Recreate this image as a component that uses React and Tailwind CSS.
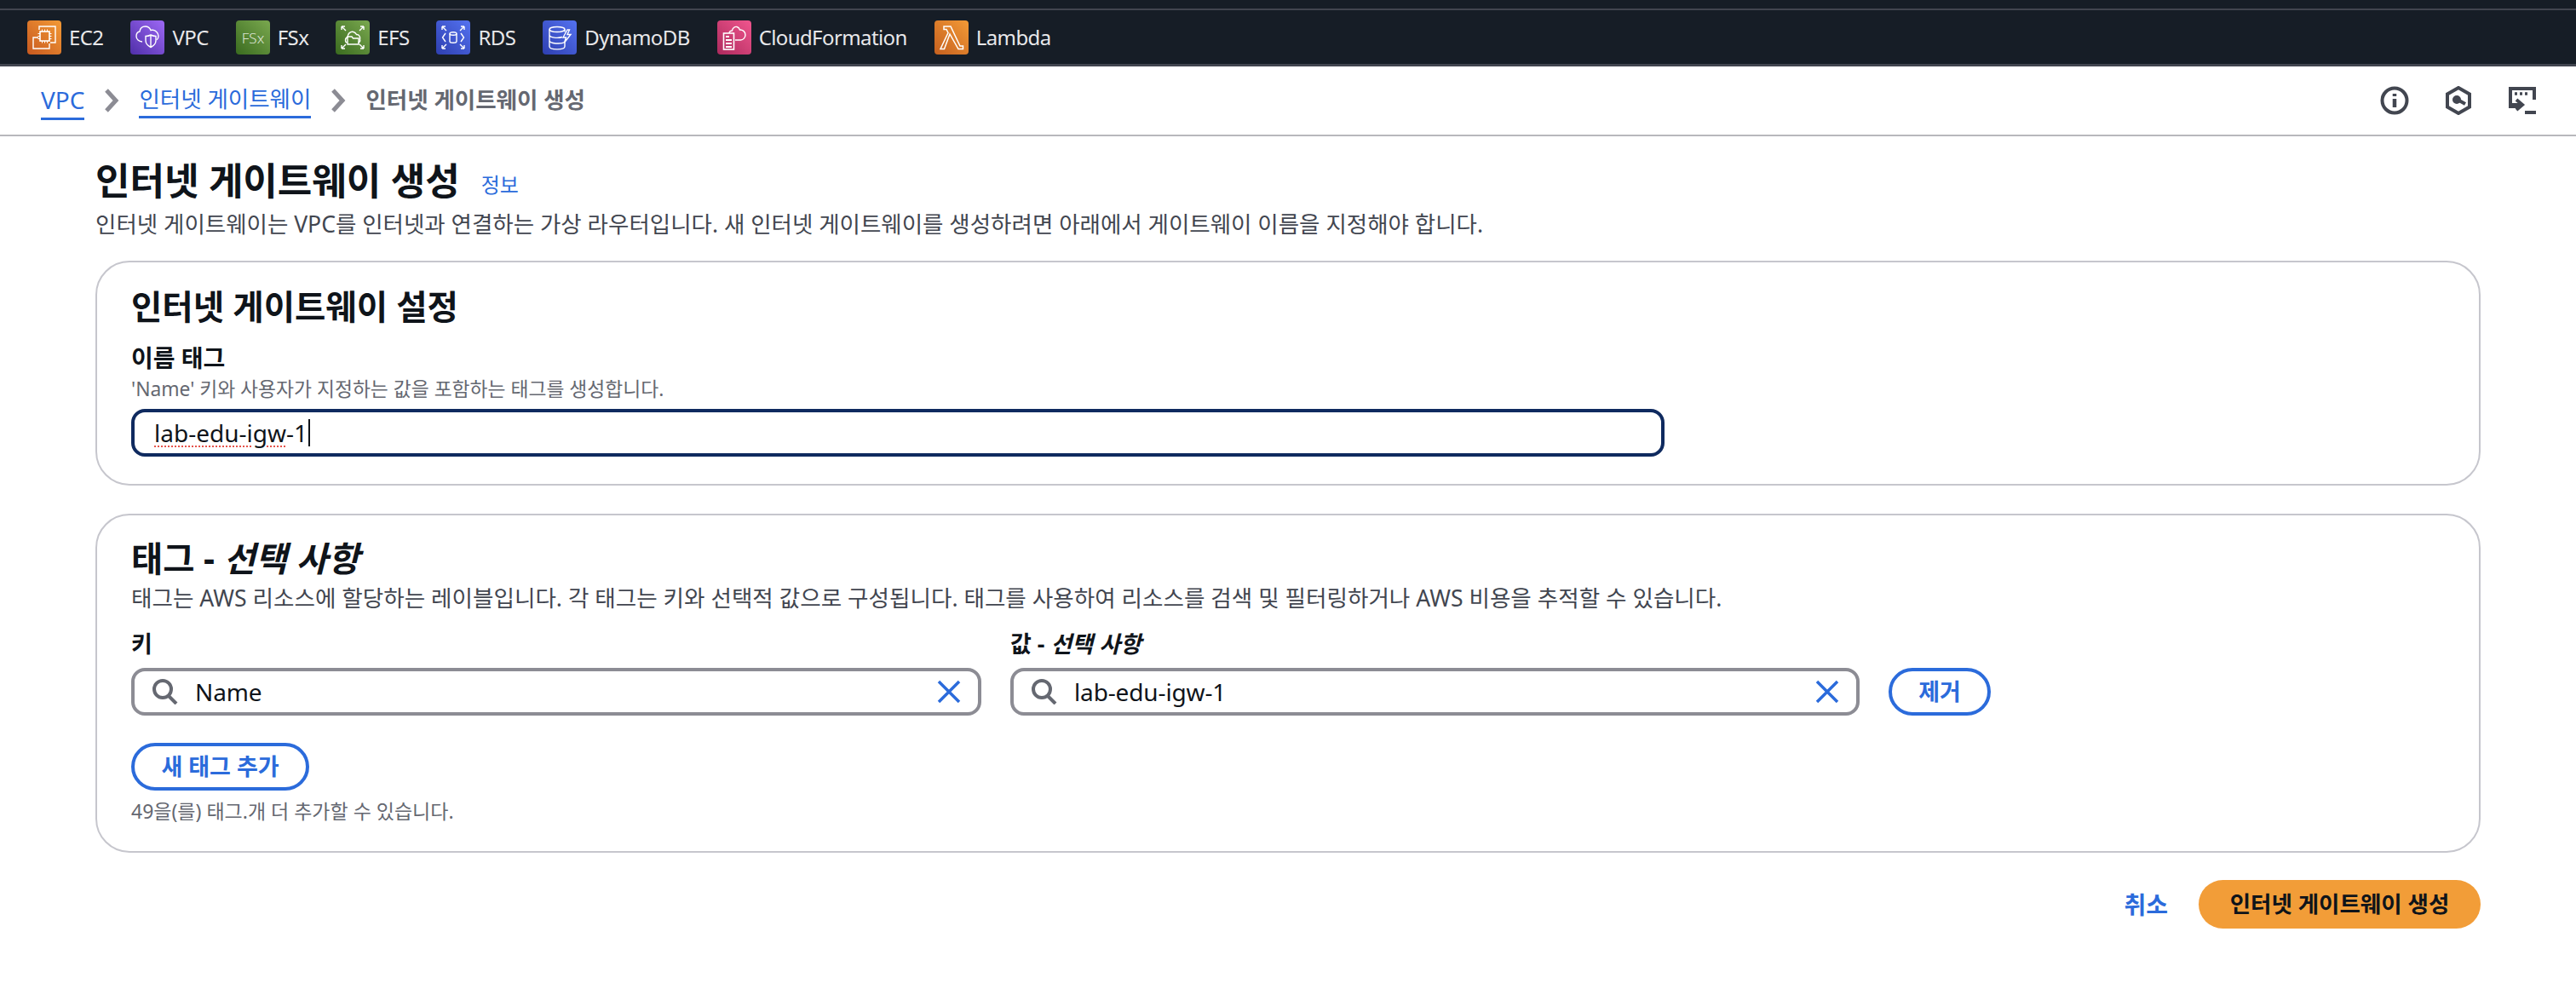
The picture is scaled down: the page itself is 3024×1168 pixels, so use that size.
import React from "react";

const FONT = { fontFamily: '"Noto Sans", "Noto Sans CJK KR", sans-serif' };

const Tile = ({ id, from, to, children }) => (
  <svg width="40" height="40" viewBox="0 0 40 40" className="shrink-0" fill="none" stroke="#fff" strokeWidth="1.4">
    <defs>
      <linearGradient id={id} x1="0" y1="1" x2="1" y2="0">
        <stop offset="0" stopColor={from} />
        <stop offset="1" stopColor={to} />
      </linearGradient>
    </defs>
    <rect width="40" height="40" rx="4" fill={`url(#${id})`} stroke="none" />
    {children}
  </svg>
);

const services = [
  {
    name: "EC2",
    icon: (
      <Tile id="t1" from="#c8591f" to="#f39a36">
        <path d="M14 11V7h19v19h-6M13 20H7v13h19v-6" />
        <rect x="15" y="13" width="11" height="11" strokeWidth="1.6" />
        <path d="M17.500 10.500v2.500M20.500 10.500v2.500M23.500 10.500v2.500M17.500 24v2.500M20.500 24v2.500M23.500 24v2.500M12.500 15.500H15M12.500 18.500H15M12.500 21.500H15M26 15.500h2.500M26 18.500h2.500M26 21.500h2.500" strokeWidth="1" />
      </Tile>
    ),
  },
  {
    name: "VPC",
    icon: (
      <Tile id="t2" from="#4f2fa8" to="#9d68f5">
        <path d="M14 25c-4 0-7-3-7-6.500 0-3 1.800-5 4-5.500 .5-3.500 3-6 6.500-6 3 0 5.500 2 6.500 4.500 .8-.3 1.500-.3 2.500-.2 3 .3 6.500 3 6.500 7 0 2-1 3.700-2 4.500" />
        <path d="M24 17c2 1 4 1.500 6 1.500v5c0 4-3 6.500-6 8-3-1.500-6-4-6-8v-5c2 0 4-.5 6-1.500zM24 18v13" />
      </Tile>
    ),
  },
  {
    name: "FSx",
    icon: (
      <Tile id="t3" from="#3a6b1f" to="#7aa84f">
        <text x="20" y="26.500" textAnchor="middle" fontSize="17" fill="#fff" fillOpacity="0.8" stroke="none" fontFamily="Noto Sans" fontWeight="300">FSx</text>
      </Tile>
    ),
  },
  {
    name: "EFS",
    icon: (
      <Tile id="t4" from="#3a6b1f" to="#7aa84f">
        <path d="M7 7l5 5M7 7h4M7 7v4M33 7l-5 5M33 7h-4M33 7v4M7 33l5-5M7 33h4M7 33v-4M33 33l-5-5M33 33h-4M33 33v-4" />
        <path d="M13.500 26c-2.500-.5-3-5 .5-6.500 0-4 3.500-7 7-6 2 .5 3 2 3.500 3 3-.2 5 3 4 6 .5 1.500-.5 3-2 3.500" />
        <path d="M14 19h5l1.500 2H27v7H14z" />
      </Tile>
    ),
  },
  {
    name: "RDS",
    icon: (
      <Tile id="t5" from="#2e3fb0" to="#5472f0">
        <path d="M7 7l5 5M7 7h4M7 7v4M33 7l-5 5M33 7h-4M33 7v4M7 33l5-5M7 33h4M7 33v-4M33 33l-5-5M33 33h-4M33 33v-4" />
        <path d="M11 15l-3.500 5 3.500 5M29 15l3.500 5-3.500 5" />
        <ellipse cx="20" cy="15.500" rx="4" ry="1.800" />
        <path d="M16 15.500v9c0 2.400 8 2.400 8 0v-9" />
      </Tile>
    ),
  },
  {
    name: "DynamoDB",
    icon: (
      <Tile id="t6" from="#2e3fb0" to="#5472f0">
        <ellipse cx="17" cy="10.500" rx="9" ry="3" />
        <path d="M8 10.500v20c0 4.500 18 4.500 18 0v-5M8 17c0 3.500 10 4 15 2.500M8 23.500c0 4 14 4.500 18 2M26 10.500v3" />
        <path d="M29 11l-5 9h3.500l-2 6 7.500-9.500h-4l2.500-5.500z" />
      </Tile>
    ),
  },
  {
    name: "CloudFormation",
    icon: (
      <Tile id="t7" from="#ad2a5d" to="#f0568e">
        <rect x="7.500" y="15" width="12" height="19" strokeWidth="1.6" />
        <path d="M10 19h4M10 23h7M10 27h7M10 31h7" strokeWidth="1.8" />
        <path d="M14 15c.2-1.500 1.500-3 3.500-3 .2-3 3-5 5.500-4.500 2 .5 3 2 3.500 3.500 3-.3 6.500 2 6.500 6 0 3-2.500 6-5.500 6H21" />
      </Tile>
    ),
  },
  {
    name: "Lambda",
    icon: (
      <Tile id="t8" from="#c5601f" to="#f39a36">
        <path d="M11 7h8l11 23h3.500v3.500H28L18 16l-6.500 17.500H7l9-19-2-4h-3z" strokeWidth="1.5" />
      </Tile>
    ),
  },
];

const Chevron = () => (
  <svg width="18" height="28" viewBox="0 0 18 28" fill="none" stroke="#8c8c94" strokeWidth="5" className="mx-[23px] shrink-0">
    <path d="M3 2l11 12L3 26" />
  </svg>
);

const SearchIcon = () => (
  <svg width="32" height="30" viewBox="0 0 32 30" fill="none" stroke="#656871" strokeWidth="4" className="mr-[19px] shrink-0">
    <circle cx="13" cy="12" r="10" />
    <path d="M20 20l9 9" />
  </svg>
);

const ClearIcon = () => (
  <svg width="28" height="28" viewBox="0 0 28 28" fill="none" stroke="#2b6bdb" strokeWidth="3.500" className="shrink-0">
    <path d="M2 2l24 24M26 2L2 26" />
  </svg>
);

const TextInput = ({ value }) => (
  <div className="flex h-14 items-center rounded-2xl border-4 border-[#8c8c94] pl-[20px] pr-[20px]">
    <SearchIcon />
    <span className="flex-1 text-[28px] tracking-[-0.005em] text-[#0f141a]">{value}</span>
    <ClearIcon />
  </div>
);

const PillButton = ({ children, className }) => (
  <button className={`flex h-14 items-center justify-center rounded-full border-4 border-[#2b6bdb] text-[27px] font-semibold text-[#2b6bdb] ${className}`}>
    {children}
  </button>
);

export default function App() {
  return (
    <div style={FONT} className="h-[1168px] w-[3024px] overflow-hidden bg-white">
      <div className="h-[10px] bg-[#161d26]" />
      <nav className="flex h-[68px] items-center gap-8 border-t-[2px] border-b-[3px] border-[#41454f] bg-[#161d26] pl-8 pt-[1px]">
        {services.map((s) => (
          <div key={s.name} className="flex items-center gap-[9px]">
            {s.icon}
            <span className="text-[24px] tracking-[-0.025em] text-[#e8e8ea]">{s.name}</span>
          </div>
        ))}
      </nav>

      <header className="flex h-[82px] items-center justify-between border-b-[2px] border-[#b8b8bc] pl-12 pr-[46px]">
        <div className="flex items-center text-[26.500px]">
          <a className="border-b-[3px] border-[#2b6bdb] text-[28px] text-[#2b6bdb]">VPC</a>
          <Chevron />
          <a className="border-b-[3px] border-[#2b6bdb] text-[#2b6bdb]">인터넷 게이트웨이</a>
          <Chevron />
          <span className="font-bold text-[#656871]">인터넷 게이트웨이 생성</span>
        </div>
        <div className="flex items-center gap-[42px]">
          <svg width="34" height="34" viewBox="0 0 34 34" fill="none" stroke="#424650" strokeWidth="4">
            <circle cx="17" cy="17" r="14.500" />
            <path d="M17 15v10M17 9v3" strokeWidth="4.500" />
          </svg>
          <svg width="32" height="34" viewBox="0 0 32 34" fill="none" stroke="#424650" strokeWidth="4">
            <path d="M16 2l13 7.500v15L16 32 3 24.500v-15z" />
            <circle cx="14" cy="16" r="3" fill="#424650" />
            <path d="M15 16l9 5" />
          </svg>
          <svg width="34" height="34" viewBox="0 0 34 34" fill="none" stroke="#424650" strokeWidth="4">
            <path d="M13 24H3V3h28v13" />
            <path d="M8 9h3M14 9h3M20 9h3" strokeWidth="3.500" />
            <path d="M10 16l7 6-7 6M3 22h13M20 31h13" />
          </svg>
        </div>
      </header>

      <main className="ml-28 w-[2800px]">
        <div className="flex items-end pt-[20px]">
          <h1 className="text-[44px] leading-[64px] font-bold text-[#0f141a]">인터넷 게이트웨이 생성</h1>
          <a className="mb-[9px] ml-[25px] text-[24px] text-[#2b6bdb]">정보</a>
        </div>
        <p className="text-[26.500px] leading-[38px] text-[#424650]">
          인터넷 게이트웨이는 VPC를 인터넷과 연결하는 가상 라우터입니다. 새 인터넷 게이트웨이를 생성하려면 아래에서 게이트웨이 이름을 지정해야 합니다.
        </p>

        <section className="mt-[24px] h-[264px] rounded-[40px] border-2 border-[#c6c6cd] px-[40px] pt-[24px]">
          <h2 className="text-[39.500px] leading-[56px] font-bold text-[#0f141a]">인터넷 게이트웨이 설정</h2>
          <div className="mt-[14px] text-[28px] leading-[36px] font-bold text-[#0f141a]">이름 태그</div>
          <div className="mt-[3px] text-[22.800px] leading-[32px] text-[#656871]">'Name' 키와 사용자가 지정하는 값을 포함하는 태그를 생성합니다.</div>
          <div className="mt-[7px] flex h-14 w-[1800px] items-center rounded-2xl border-4 border-[#0f2a5f] pl-[23px] text-[28px] text-[#0f141a]">
            <span className="underline decoration-[#e5534b] decoration-dotted decoration-2 underline-offset-4">lab-edu-igw</span>
            <span>-1</span>
            <span className="ml-[1px] h-[32px] w-[2px] bg-[#0f141a]" />
          </div>
        </section>

        <section className="mt-[33px] h-[398px] rounded-[40px] border-2 border-[#c6c6cd] px-[40px] pt-[24px]">
          <h2 className="text-[40.500px] leading-[54px] font-bold text-[#0f141a]">
            태그 - <span className="italic">선택 사항</span>
          </h2>
          <p className="text-[26.600px] leading-[38px] text-[#424650]">
            태그는 AWS 리소스에 할당하는 레이블입니다. 각 태그는 키와 선택적 값으로 구성됩니다. 태그를 사용하여 리소스를 검색 및 필터링하거나 AWS 비용을 추적할 수 있습니다.
          </p>
          <div className="mt-[17px] flex items-end gap-[34px]">
            <div className="w-[998px]">
              <div className="mb-[10px] text-[27px] leading-[36px] font-bold text-[#0f141a]">키</div>
              <TextInput value="Name" />
            </div>
            <div className="w-[997px]">
              <div className="mb-[10px] text-[27px] leading-[36px] font-bold text-[#0f141a]">
                값 - <span className="italic">선택 사항</span>
              </div>
              <TextInput value="lab-edu-igw-1" />
            </div>
            <PillButton className="w-[120px]">제거</PillButton>
          </div>
          <PillButton className="mt-[32px] w-[209px]">새 태그 추가</PillButton>
          <div className="mt-[8px] text-[23px] leading-[32px] text-[#656871]">49을(를) 태그.개 더 추가할 수 있습니다.</div>
        </section>

        <div className="mt-[32px] flex items-center justify-end gap-9">
          <a className="text-[28px] font-semibold text-[#2b6bdb]">취소</a>
          <button className="h-[57px] w-[331px] rounded-full bg-[#f29d38] text-[26.500px] font-bold text-[#0f141a]">
            인터넷 게이트웨이 생성
          </button>
        </div>
      </main>
    </div>
  );
}
